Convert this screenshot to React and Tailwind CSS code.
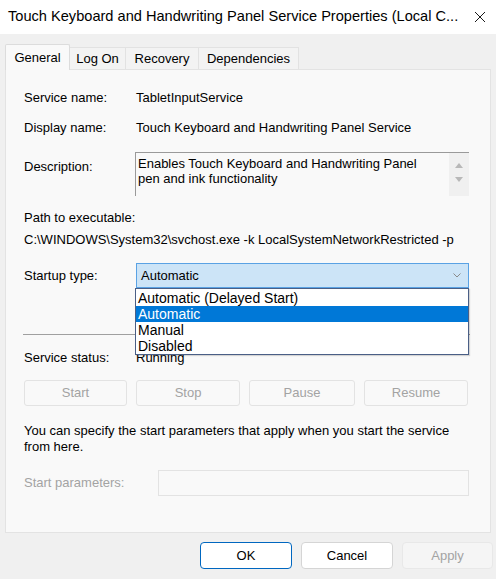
const font = { fontFamily: '"Liberation Sans", Arial, sans-serif' };

function DisabledButton({ label, className = "" }) {
  return (
    <div
      className={`h-[26px] flex items-center justify-center rounded-[3px] border border-[#e3e3e3] bg-[#f9f9f9] text-[13px] text-[#a3a3a3] ${className}`}
    >
      {label}
    </div>
  );
}

export default function App() {
  return (
    <div
      className="w-[496px] h-[579px] bg-[#f0f0f0] flex flex-col text-black overflow-hidden"
      style={font}
    >
      {/* Title bar */}
      <div className="h-[34px] bg-white flex items-center justify-between pl-2 pr-[10px] shrink-0">
        <span className="text-[14.6px] whitespace-nowrap">
          Touch Keyboard and Handwriting Panel Service Properties (Local C...
        </span>
        <svg width="12" height="12" viewBox="0 0 12 12">
          <path d="M1 1L11 11M11 1L1 11" stroke="#1a1a1a" strokeWidth="1" />
        </svg>
      </div>

      {/* Tabs */}
      <div className="flex items-end pl-[5px] pt-[10px] h-[35px] shrink-0">
        <div className="h-[26px] w-[65px] bg-[#f9f9f9] border border-b-0 border-[#dcdcdc] rounded-t-[2px] flex items-center justify-center text-[13px] relative top-[1px] z-10">
          General
        </div>
        <div className="h-[22px] w-[56px] bg-[#f3f3f3] border-t border-r border-[#e2e2e2] flex items-center justify-center text-[13px]">
          Log On
        </div>
        <div className="h-[22px] w-[73px] bg-[#f3f3f3] border-t border-r border-[#e2e2e2] flex items-center justify-center text-[13px]">
          Recovery
        </div>
        <div className="h-[22px] w-[100px] bg-[#f3f3f3] border-t border-r border-[#e2e2e2] flex items-center justify-center text-[13px]">
          Dependencies
        </div>
      </div>

      {/* Panel */}
      <div className="mx-[5px] h-[464px] bg-[#f9f9f9] border border-[#e3e3e3] shrink-0 flex flex-col pl-[18px] pr-[21px] text-[13px] leading-[16px]">
        <div className="flex mt-[20px] h-[16px]">
          <span className="w-[112px]">Service name:</span>
          <span>TabletInputService</span>
        </div>
        <div className="flex mt-[14px] h-[16px]">
          <span className="w-[112px]">Display name:</span>
          <span>Touch Keyboard and Handwriting Panel Service</span>
        </div>
        <div className="flex mt-[16px]">
          <span className="w-[111px] pt-[7px]">Description:</span>
          <div className="flex-1 h-[44px] border-t border-l border-[#9a9a9a] flex">
            <div className="flex-1 pl-[2px] pt-[3px] leading-[15px]">
              Enables Touch Keyboard and Handwriting Panel
              <br />
              pen and ink functionality
            </div>
            <div className="w-[20px] bg-[#f0f0f0] flex flex-col items-center pt-[9px] gap-[9px]">
              <svg width="8" height="6" viewBox="0 0 8 6">
                <path d="M0 6L4 1L8 6Z" fill="#b8b8b8" />
              </svg>
              <svg width="8" height="6" viewBox="0 0 8 6">
                <path d="M0 0L4 5L8 0Z" fill="#b8b8b8" />
              </svg>
            </div>
          </div>
        </div>
        <div className="mt-[14px] h-[16px]">Path to executable:</div>
        <div className="mt-[6px] h-[16px] whitespace-nowrap">
          C:\WINDOWS\System32\svchost.exe -k LocalSystemNetworkRestricted -p
        </div>
        <div className="flex items-center mt-[15px]">
          <span className="w-[112px]">Startup type:</span>
          <div className="relative flex-1">
            <div className="h-[25px] bg-[#cce4f7] border border-[#5aa2e4] flex items-center justify-between pl-[4px] pr-[7px]">
              <span>Automatic</span>
              <svg width="8" height="5" viewBox="0 0 8 5">
                <path d="M0.5 0.5L4 4L7.5 0.5" stroke="#8a8a8a" fill="none" strokeWidth="1" />
              </svg>
            </div>
            <div className="absolute left-[-1px] top-[25px] w-[334px] bg-white border border-[#4a5f86] z-20 shadow-[1px_1px_1px_rgba(0,0,0,0.15)]">
              <div className="h-[17px] flex items-center pl-[2px] text-[14px]">Automatic (Delayed Start)</div>
              <div className="h-[16px] flex items-center pl-[2px] text-[14px] bg-[#0078d7] text-white">Automatic</div>
              <div className="h-[16px] flex items-center pl-[2px] text-[14px]">Manual</div>
              <div className="h-[16px] flex items-center pl-[2px] text-[14px]">Disabled</div>
            </div>
          </div>
        </div>
        <div className="mt-[46px] h-px bg-[#a0a0a0] mr-[-1px] ml-[-1px]" />
        <div className="flex mt-[15px] h-[16px]">
          <span className="w-[112px]">Service status:</span>
          <span>Running</span>
        </div>
        <div className="flex mt-[14px] gap-[9px]">
          <DisabledButton label="Start" className="w-[103px]" />
          <DisabledButton label="Stop" className="w-[104px]" />
          <DisabledButton label="Pause" className="w-[106px]" />
          <DisabledButton label="Resume" className="w-[104px]" />
        </div>
        <div className="mt-[17px]">
          You can specify the start parameters that apply when you start the service
          <br />
          from here.
        </div>
        <div className="flex items-center mt-[15px]">
          <span className="w-[134px] text-[#a3a3a3]">Start parameters:</span>
          <div className="flex-1 h-[26px] border border-[#e3e3e3] bg-[#f9f9f9]" />
        </div>
      </div>

      {/* Bottom buttons */}
      <div className="flex justify-end mt-[9px] pr-[3px] gap-[9px] text-[13px]">
        <div className="w-[92px] h-[27px] bg-white border border-[#0067c0] rounded-[4px] flex items-center justify-center">
          OK
        </div>
        <div className="w-[92px] h-[27px] bg-white border border-[#d5d5d5] rounded-[4px] flex items-center justify-center">
          Cancel
        </div>
        <div className="w-[91px] h-[27px] bg-[#f5f5f5] border border-[#e8e8e8] rounded-[4px] flex items-center justify-center text-[#a3a3a3]">
          Apply
        </div>
      </div>
    </div>
  );
}
